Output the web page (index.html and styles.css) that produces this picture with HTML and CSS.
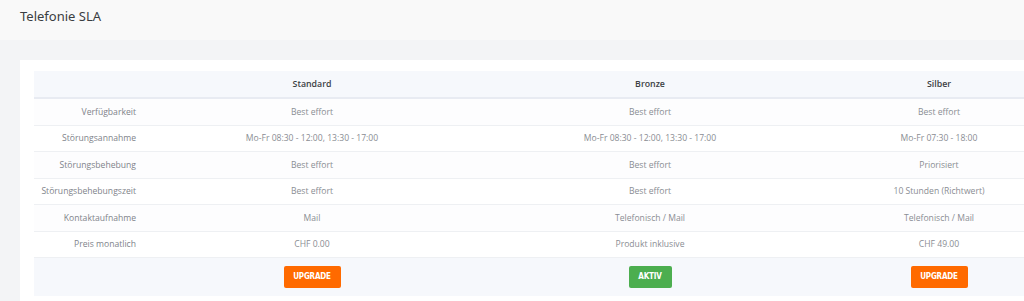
FILE: index.html
```html
<!DOCTYPE html>
<html lang="de">
<head>
<meta charset="utf-8">
<title>Telefonie SLA</title>
<link rel="stylesheet" href="styles.css">
</head>
<body>
<header class="topbar"><h1 class="title">Telefonie SLA</h1></header>
<main class="content">
  <section class="card">
    <table class="sla">
      <colgroup>
        <col class="c-label"><col class="c-std"><col class="c-bronze"><col class="c-silber">
      </colgroup>
      <thead>
        <tr><th></th><th>Standard</th><th>Bronze</th><th>Silber</th></tr>
      </thead>
      <tbody>
        <tr><td class="lbl">Verfügbarkeit</td><td>Best effort</td><td>Best effort</td><td>Best effort</td></tr>
        <tr><td class="lbl">Störungsannahme</td><td>Mo-Fr 08:30 - 12:00, 13:30 - 17:00</td><td>Mo-Fr 08:30 - 12:00, 13:30 - 17:00</td><td>Mo-Fr 07:30 - 18:00</td></tr>
        <tr><td class="lbl">Störungsbehebung</td><td>Best effort</td><td>Best effort</td><td>Priorisiert</td></tr>
        <tr><td class="lbl">Störungsbehebungszeit</td><td>Best effort</td><td>Best effort</td><td>10 Stunden (Richtwert)</td></tr>
        <tr><td class="lbl">Kontaktaufnahme</td><td>Mail</td><td>Telefonisch / Mail</td><td>Telefonisch / Mail</td></tr>
        <tr><td class="lbl">Preis monatlich</td><td>CHF 0.00</td><td>Produkt inklusive</td><td>CHF 49.00</td></tr>
      </tbody>
      <tfoot>
        <tr><td></td><td><span class="btn btn-up">UPGRADE</span></td><td><span class="btn btn-active">AKTIV</span></td><td><span class="btn btn-up">UPGRADE</span></td></tr>
      </tfoot>
    </table>
  </section>
</main>
</body>
</html>
```
FILE: styles.css
```css
html, body { margin: 0; padding: 0; }
body {
  background: #f3f4f6;
  font-family: "Open Sans", "Noto Sans", sans-serif;
  overflow: hidden;
  width: 1024px;
  height: 301px;
}
.topbar {
  height: 40px;
  background: #f9f9f9;
  display: flex;
  align-items: center;
  padding-left: 20px;
}
.title {
  margin: 0;
  font-family: "Noto Sans", "Open Sans", sans-serif;
  font-size: 13px;
  font-weight: 400;
  color: #3a3d42;
  position: relative;
  top: -4px;
}
.content {
  padding: 20px 0 0 20px;
  height: 241px;
  overflow: hidden;
}
.card {
  background: #fff;
  padding: 11px 0 0 14px;
  height: 230px;
  overflow: hidden;
}
.sla {
  border-collapse: collapse;
  table-layout: fixed;
  width: 1022px;
  font-size: 8.6px;
  color: #8a8d93;
}
.c-label { width: 112px; }
.c-std { width: 332px; }
.c-bronze { width: 344px; }
.c-silber { width: 234px; }
.sla thead th {
  background: #f6f8fc;
  height: 26px;
  padding: 0;
  font-weight: 600;
  color: #3c3f44;
  font-size: 8.8px;
  border-bottom: 2px solid #e8ebf2;
}
.sla tbody td {
  height: 25.5px;
  padding: 0;
  text-align: center;
  border-bottom: 1px solid #eef0f3;
  white-space: nowrap;
}
.sla tbody tr:nth-child(odd) td { background: #fdfdfe; }
.sla tbody td.lbl {
  text-align: right;
  padding-right: 10px;
  color: #80838a;
}
.sla tfoot td {
  background: #f6f8fc;
  height: 38px;
  padding: 0;
  text-align: center;
}
.btn {
  display: inline-block;
  height: 22px;
  line-height: 22px;
  border-radius: 2px;
  color: #fff;
  font-family: "DejaVu Sans Condensed", "DejaVu Sans", sans-serif;
  font-stretch: condensed;
  font-weight: 700;
  font-size: 8px;
  letter-spacing: -0.2px;
  vertical-align: middle;
}
.btn-up { background: #ff6a00; width: 57px; }
.btn-active { background: #4cae4f; width: 43px; }
```
